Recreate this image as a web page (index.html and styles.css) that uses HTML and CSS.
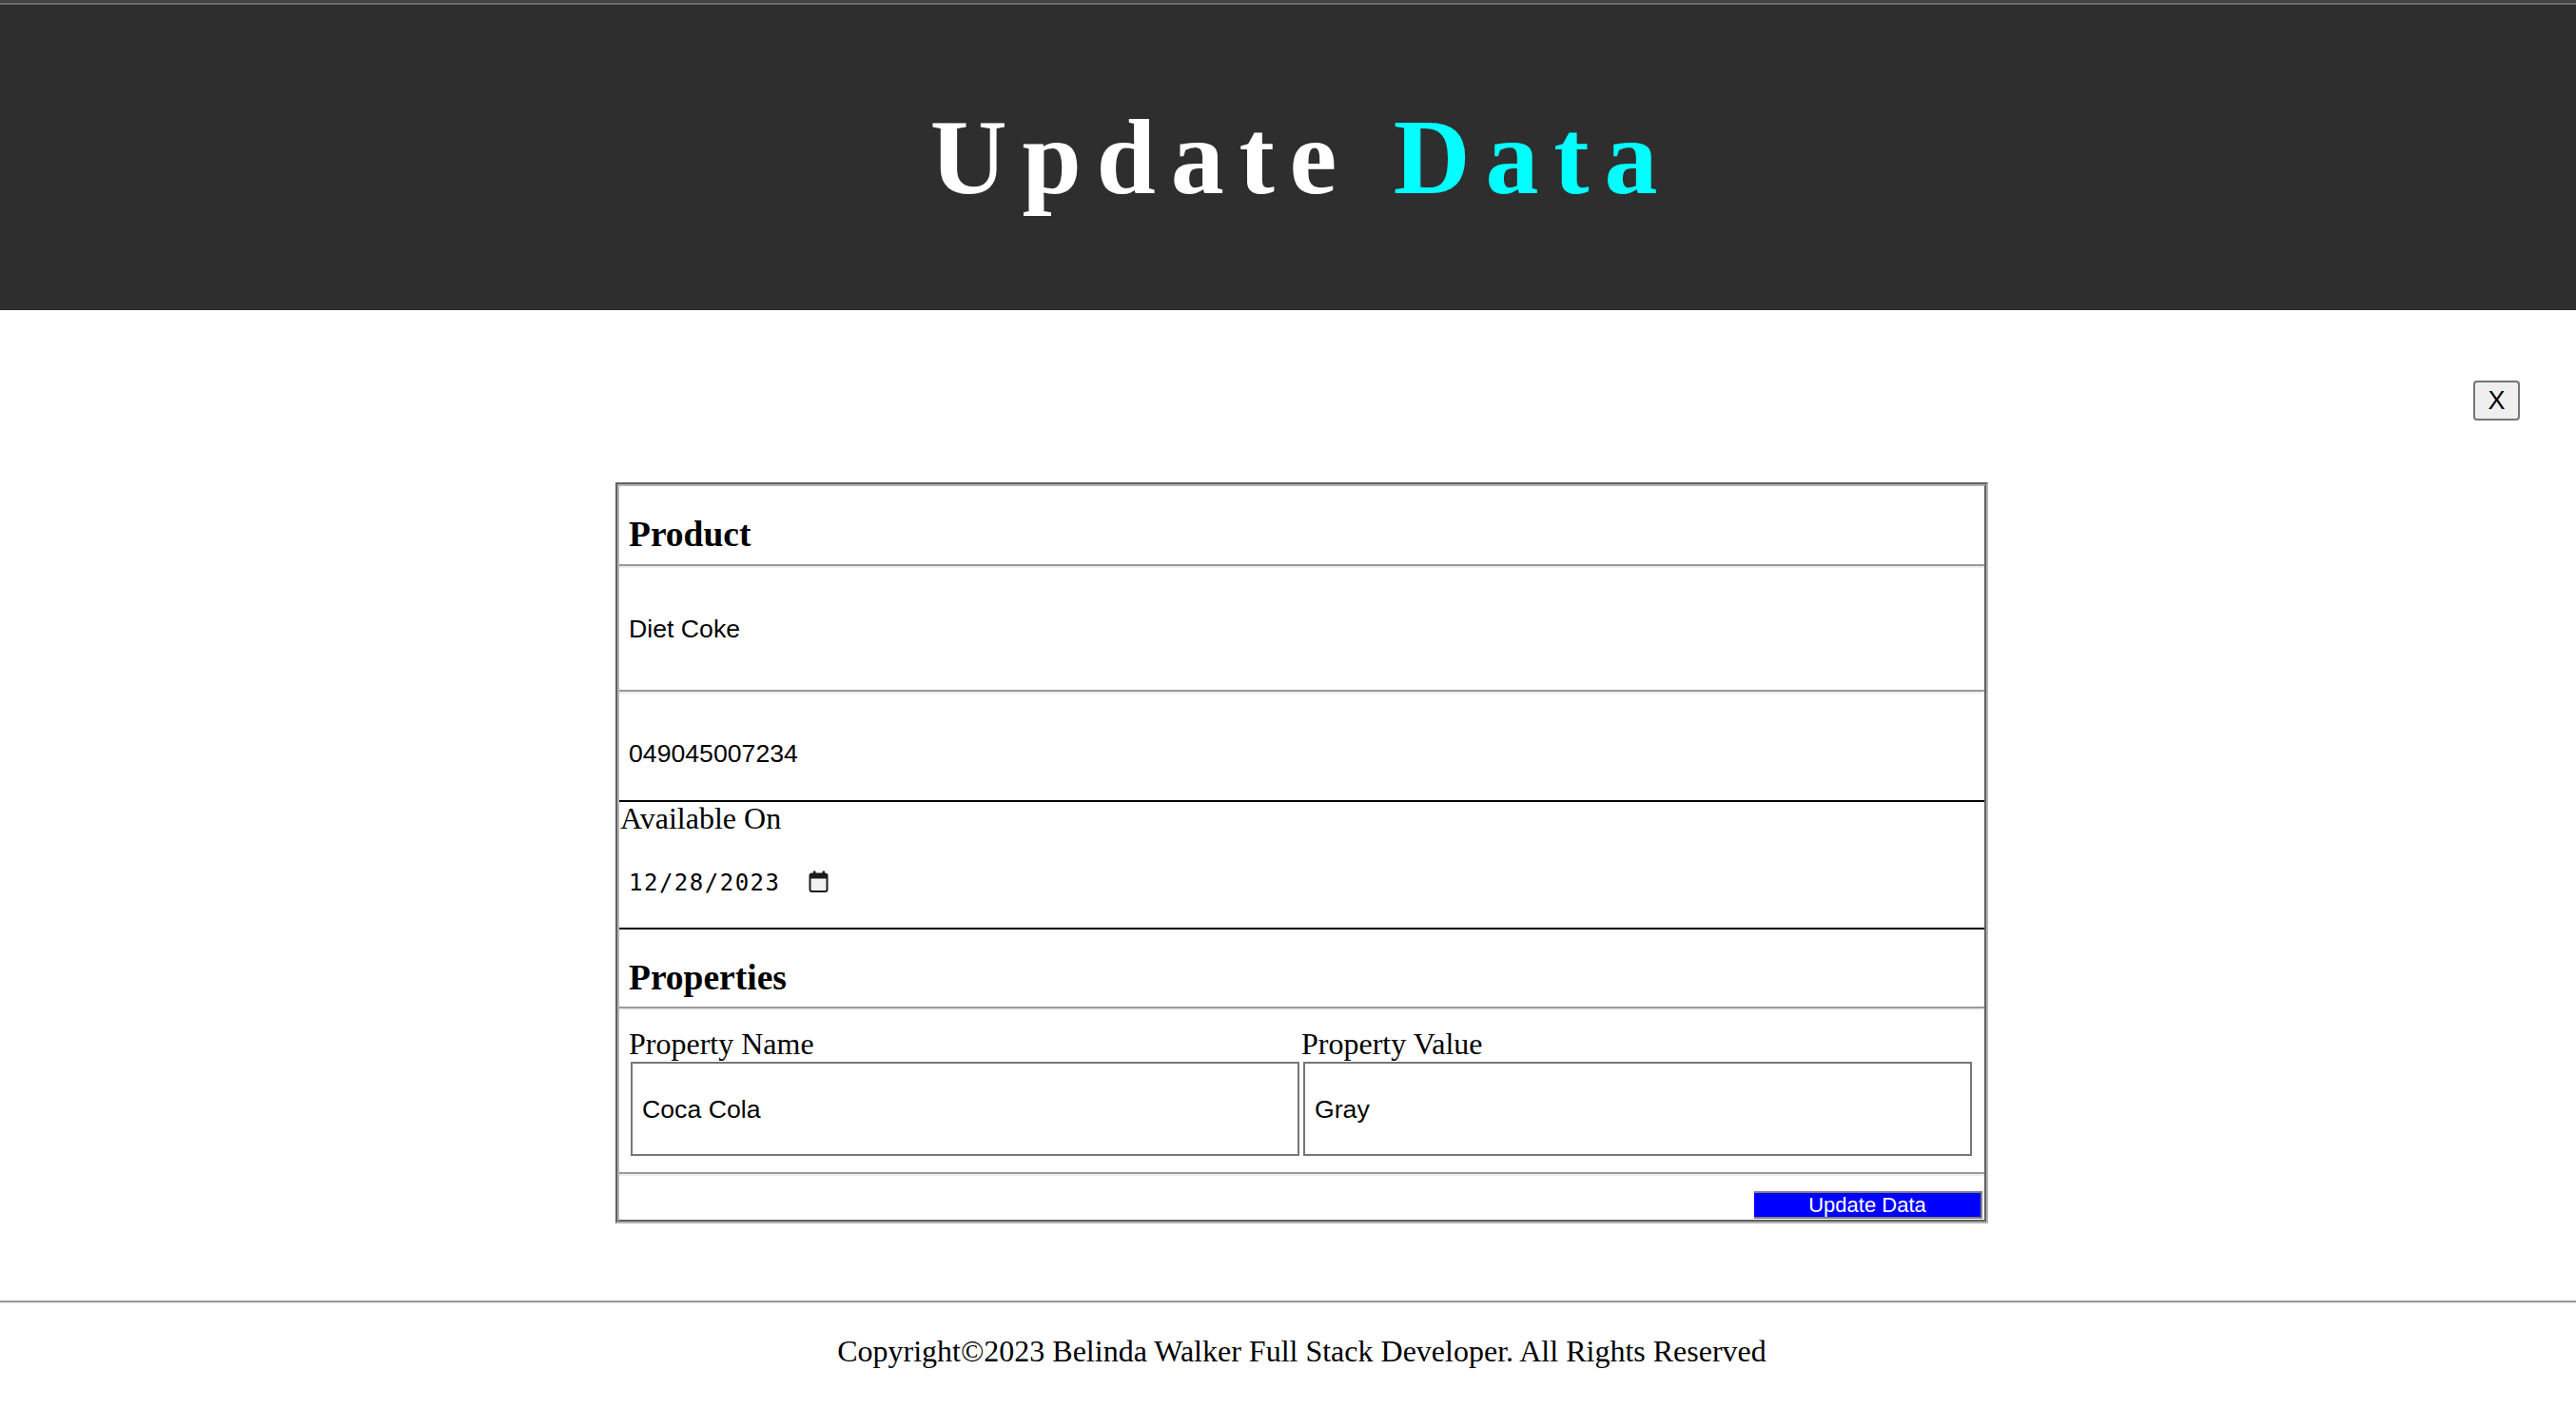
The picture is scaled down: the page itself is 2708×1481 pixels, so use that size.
FILE: index.html
```html
<!DOCTYPE html>
<html lang="en">
<head>
<meta charset="utf-8">
<title>Update Data</title>
<link rel="stylesheet" href="styles.css">
</head>
<body>
<header class="site-header">
  <h1 class="title">Update <span class="accent">Data</span></h1>
</header>
<main class="main">
  <div class="close-row"><button class="close-btn" type="button">X</button></div>
  <form class="update-form">
    <div class="box">
      <div class="row-heading"><h3 class="heading">Product</h3></div>
      <hr class="sep">
      <div class="row-name"><span class="field-text">Diet Coke</span></div>
      <hr class="sep">
      <div class="row-upc"><span class="field-text">049045007234</span></div>
      <div class="row-date">
        <label class="label-date">Available On</label>
        <div class="date-field">
          <span class="date-text">12/28/2023</span>
          <svg class="cal-icon" width="21" height="23" viewBox="0 0 21 23" aria-hidden="true">
            <rect x="5" y="0.5" width="2.5" height="4" fill="#1b1b1b"/>
            <rect x="14.5" y="0.5" width="2.5" height="4" fill="#1b1b1b"/>
            <rect x="1.5" y="3.5" width="18" height="18.5" rx="2" fill="#f2f2f2" stroke="#1b1b1b" stroke-width="2"/>
            <rect x="1.5" y="3.5" width="18" height="5" fill="#1b1b1b"/>
          </svg>
        </div>
      </div>
      <div class="row-heading row-heading-short"><h3 class="heading">Properties</h3></div>
      <hr class="sep">
      <div class="props">
        <div class="prop-col">
          <label class="prop-label">Property Name</label>
          <div class="prop-input">Coca Cola</div>
        </div>
        <div class="prop-col">
          <label class="prop-label">Property Value</label>
          <div class="prop-input">Gray</div>
        </div>
      </div>
      <hr class="sep">
      <div class="actions"><button class="submit" type="button">Update Data</button></div>
    </div>
  </form>
</main>
<footer class="site-footer">
  <hr class="footer-sep">
  <p class="copyright">Copyright©2023 Belinda Walker Full Stack Developer. All Rights Reserved</p>
</footer>
</body>
</html>
```
FILE: styles.css
```css
body {
  margin: 0;
  font-family: "Liberation Serif", "Times New Roman", serif;
  color: #000;
  background: #fff;
}

.site-header {
  background: #2e2e2e;
  box-shadow: inset 0 3px 0 #44454a, inset 0 5px 0 #6c6c6c;
  height: 326px;
  box-sizing: border-box;
  padding-top: 100px;
  padding-left: 28px;
}

.title {
  margin: 0;
  font-size: 112px;
  line-height: 130px;
  font-weight: 700;
  letter-spacing: 15.8px;
  color: #fff;
  text-align: center;
}

.accent {
  color: #00ffff;
}

.main {
  padding-left: 29px;
}

.close-row {
  display: flex;
  justify-content: flex-end;
  padding-right: 59px;
  margin-top: 74px;
}

.close-btn {
  width: 49px;
  height: 42px;
  box-sizing: border-box;
  border: 2px solid #767676;
  border-radius: 4px;
  background: #efefef;
  font-family: "Liberation Sans", Arial, sans-serif;
  font-size: 27px;
  line-height: 1;
  padding: 0;
  color: #000;
  display: flex;
  align-items: center;
  justify-content: center;
}

.update-form {
  margin: 0;
}

.box {
  width: 1443px;
  box-sizing: border-box;
  margin: 65px auto 0;
  border: 4px groove #b4b4b4;
}

.row-heading {
  height: 82px;
  box-sizing: border-box;
  padding: 29px 10px 0;
}

.row-heading-short {
  height: 81px;
}

.heading {
  margin: 0;
  font-size: 37.5px;
  line-height: 44px;
  font-weight: 700;
}

.sep {
  margin: 0;
  height: 0;
  border: 0;
  border-top: 2px solid #9a9a9a;
  border-bottom: 2px solid #eeeeee;
}

.row-name {
  height: 128px;
  box-sizing: border-box;
  padding: 48px 10px 0;
}

.row-upc {
  height: 112px;
  box-sizing: border-box;
  padding: 47px 10px 0;
}

.field-text {
  display: block;
  font-family: "Liberation Sans", Arial, sans-serif;
  font-size: 26.67px;
  line-height: 32px;
}

.row-date {
  height: 136px;
  box-sizing: border-box;
  border-top: 2px solid #000;
  border-bottom: 2px solid #000;
}

.label-date {
  display: block;
  font-size: 32px;
  line-height: 34px;
  padding-left: 1px;
}

.date-field {
  display: flex;
  align-items: flex-start;
  height: 30px;
  margin-top: 36px;
  padding-left: 10px;
}

.date-text {
  font-family: "DejaVu Sans Mono", monospace;
  font-size: 24px;
  line-height: 30px;
  letter-spacing: 1.5px;
}

.cal-icon {
  display: block;
  margin-left: 29px;
  margin-top: 2px;
}

.props {
  display: grid;
  grid-template-columns: 707px 707px;
  height: 170px;
  box-sizing: border-box;
  padding: 18px 10px 0;
}

.prop-label {
  display: block;
  font-size: 32px;
  line-height: 34px;
}

.prop-input {
  width: 703px;
  height: 99px;
  box-sizing: border-box;
  margin: 2px 0 0 2px;
  border: 2px solid #767676;
  display: flex;
  align-items: center;
  padding-left: 10px;
  font-family: "Liberation Sans", Arial, sans-serif;
  font-size: 26.67px;
  line-height: 32px;
}

.actions {
  height: 46px;
  box-sizing: border-box;
  display: flex;
  justify-content: flex-end;
  align-items: flex-start;
  padding: 16px 2px 0 0;
}

.submit {
  width: 240px;
  height: 29px;
  box-sizing: border-box;
  background: #0000ff;
  color: #fff;
  border: 2px solid #808080;
  border-left: 0;
  padding: 0;
  font-family: "Liberation Sans", Arial, sans-serif;
  font-size: 22px;
  line-height: 1;
}

.footer-sep {
  margin: 81px 0 0;
  height: 0;
  border: 0;
  border-top: 2px solid #9a9a9a;
  border-bottom: 1px solid #eeeeee;
}

.copyright {
  margin: 32px 0 0;
  padding-left: 29px;
  text-align: center;
  font-size: 32px;
  line-height: 37px;
}
```
